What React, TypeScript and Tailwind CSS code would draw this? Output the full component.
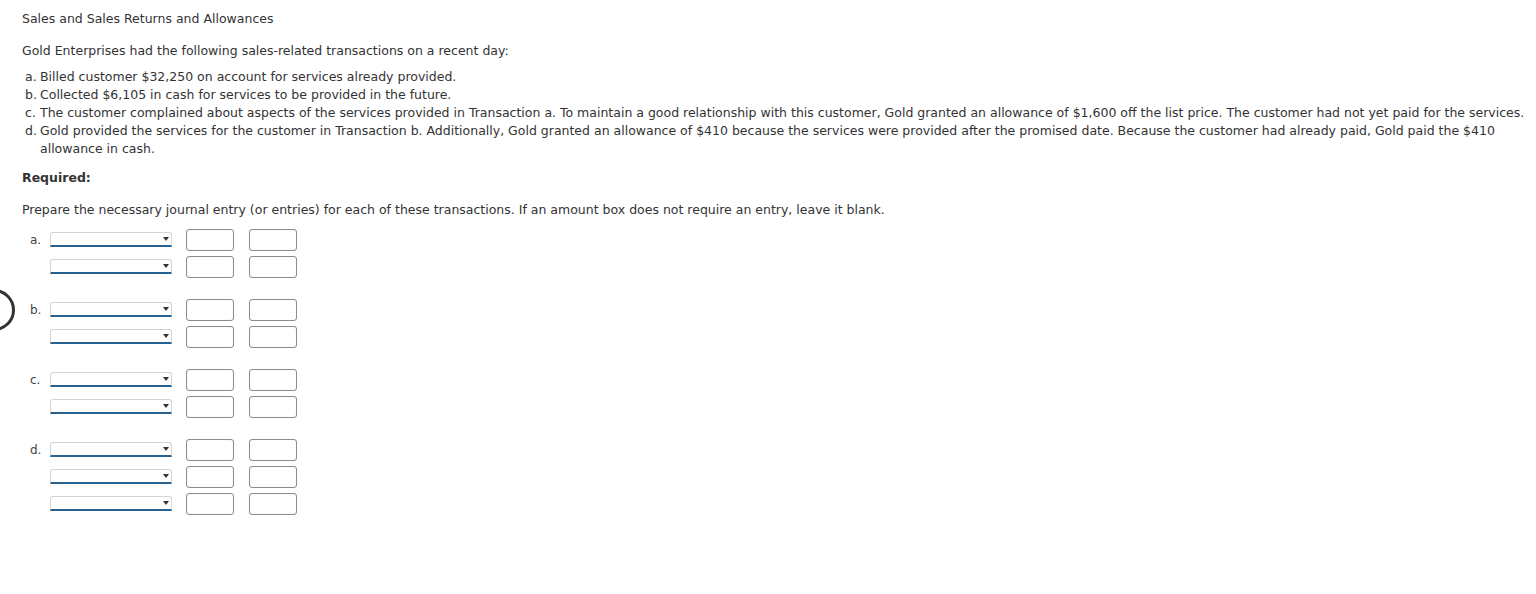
const transactions = [
  { key: 'a', text: 'Billed customer $32,250 on account for services already provided.' },
  { key: 'b', text: 'Collected $6,105 in cash for services to be provided in the future.' },
  {
    key: 'c',
    text: 'The customer complained about aspects of the services provided in Transaction a. To maintain a good relationship with this customer, Gold granted an allowance of $1,600 off the list price. The customer had not yet paid for the services.',
  },
  {
    key: 'd',
    text: 'Gold provided the services for the customer in Transaction b. Additionally, Gold granted an allowance of $410 because the services were provided after the promised date. Because the customer had already paid, Gold paid the $410 allowance in cash.',
  },
]

const entries = [
  { key: 'a', rows: 2 },
  { key: 'b', rows: 2 },
  { key: 'c', rows: 2 },
  { key: 'd', rows: 3 },
]

function AccountSelect() {
  return (
    <div className="relative mt-[3px] h-[15px] w-[122px] rounded-t-[3px] border border-b-2 border-[#d4d4d4] border-b-[#27618f] bg-white">
      <span className="absolute right-[2px] top-[4px] h-0 w-0 border-x-[3px] border-t-[4px] border-x-transparent border-t-[#333]" />
    </div>
  )
}

function AmountBox() {
  return <div className="h-[22px] w-[48px] rounded-[3px] border border-[#8c8c8c] bg-white shadow-[inset_0_0_1px_rgba(0,0,0,0.15)]" />
}

export default function App() {
  return (
    <div className="relative min-h-[594px] bg-white pl-[22px] pt-[10px] text-[12.5px] leading-[18px] text-[#333] font-['DejaVu_Sans',Verdana,sans-serif]">
      <span className="absolute left-[-27px] top-[289px] h-[42px] w-[42px] rounded-full border-[3px] border-[#333]" />

      <div>Sales and Sales Returns and Allowances</div>

      <p className="mt-[14px]">Gold Enterprises had the following sales-related transactions on a recent day:</p>

      <ol className="mt-[8px] pl-[3px]">
        {transactions.map(t => (
          <li key={t.key} className="flex">
            <span className="w-[15px] shrink-0">{t.key}.</span>
            <span>{t.text}</span>
          </li>
        ))}
      </ol>

      <div className="mt-[11px] font-bold">Required:</div>

      <p className="mt-[14px]">Prepare the necessary journal entry (or entries) for each of these transactions. If an amount box does not require an entry, leave it blank.</p>

      <div className="mt-[10px]">
        {entries.map(e => (
          <div key={e.key} className="mb-[16px]">
            {Array.from({ length: e.rows }).map((_, i) => (
              <div key={i} className="flex h-[27px] items-start">
                <span className="w-[28px] shrink-0 pl-[8px] pt-[2px] text-[12px] text-[#444]">{i === 0 ? `${e.key}.` : ''}</span>
                <AccountSelect />
                <div className="ml-[14px]">
                  <AmountBox />
                </div>
                <div className="ml-[15px]">
                  <AmountBox />
                </div>
              </div>
            ))}
          </div>
        ))}
      </div>
    </div>
  )
}
